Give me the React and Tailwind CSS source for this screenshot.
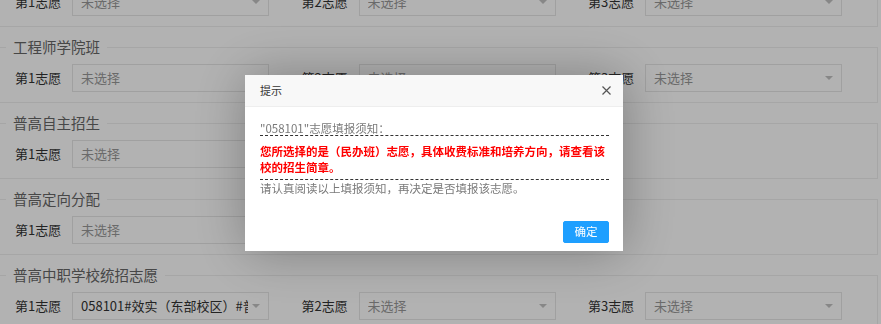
import React from 'react';

const Choice = ({ label, value }) => (
  <div className="flex items-center w-[286.5px] shrink-0">
    <span className="w-[57px] shrink-0 text-[13px] text-[#333]">{label}</span>
    <div className="flex items-center w-[197px] h-[28px] border border-[#e6e6e6] bg-white pl-[8px]">
      <span
        className={
          'flex-1 min-w-0 overflow-hidden whitespace-nowrap text-[13px] ' +
          (value ? 'text-[#333]' : 'text-[#999]')
        }
      >
        {value || '未选择'}
      </span>
      <span className="ml-[4px] mr-[8px] w-0 h-0 border-x-[4px] border-t-[4px] border-x-transparent border-t-[#c2c2c2]" />
    </div>
  </div>
);

const Group = ({ title, items, first }) => (
  <fieldset
    className={
      'border border-[#eee] ml-[-5px] w-[883px] mb-[8px] ' + (first ? 'mt-[-41px]' : '')
    }
  >
    <legend className="ml-[10px] px-[7px] text-[14.5px] leading-[24px] text-[#666]">{title}</legend>
    <div className="flex items-center pl-[19px] pt-[5px] pb-[10px]">
      {items.map((it) => (
        <Choice key={it.label} label={it.label} value={it.value} />
      ))}
    </div>
  </fieldset>
);

const three = [{ label: '第1志愿' }, { label: '第2志愿' }, { label: '第3志愿' }];

export default function App() {
  return (
    <div className="relative w-[881px] h-[324px] overflow-hidden bg-white font-['Noto_Sans_CJK_SC',sans-serif]">
      <Group first title="提前招生" items={three} />
      <Group title="工程师学院班" items={three} />
      <Group title="普高自主招生" items={[{ label: '第1志愿' }]} />
      <Group title="普高定向分配" items={[{ label: '第1志愿' }]} />
      <Group
        title="普高中职学校统招志愿"
        items={[
          { label: '第1志愿', value: '058101#效实（东部校区）#普通高中' },
          { label: '第2志愿' },
          { label: '第3志愿' },
        ]}
      />

      <div className="fixed inset-0 bg-black/30" />

      <div className="fixed left-[245px] top-[75px] w-[378px] bg-white shadow-[1px_1px_50px_rgba(0,0,0,0.3)]">
        <div className="flex items-center justify-between h-[32px] bg-[#f8f8f8] border-b border-[#eee] pl-[15px] pr-[12px]">
          <span className="text-[11px] text-[#333]">提示</span>
          <svg width="9" height="9" viewBox="0 0 9 9" className="block">
            <path d="M0.5 0.5L8.5 8.5M8.5 0.5L0.5 8.5" stroke="#555" strokeWidth="1.2" fill="none" />
          </svg>
        </div>
        <div className="pl-[15px] pr-[14px] pt-[14px]">
          <p className="text-[11.5px] leading-[14px] text-[#7a7a7a] border-b border-dashed border-[#333]">
            "058101"志愿填报须知：
          </p>
          <p className="pt-[7px] pb-[4px] text-[11.5px] leading-[16px] font-bold text-[#f00]">
            您所选择的是（民办班）志愿，具体收费标准和培养方向，请查看该校的招生简章。
          </p>
          <p className="text-[11.5px] leading-[16px] text-[#7a7a7a] border-t border-dashed border-[#333]">
            请认真阅读以上填报须知，再决定是否填报该志愿。
          </p>
        </div>
        <div className="flex justify-end pt-[25px] pb-[8px] pr-[14px]">
          <button className="w-[46px] h-[22px] bg-[#1e9fff] text-white text-[11.5px] rounded-[2px] border border-[#1e9fff]">
            确定
          </button>
        </div>
      </div>
    </div>
  );
}
